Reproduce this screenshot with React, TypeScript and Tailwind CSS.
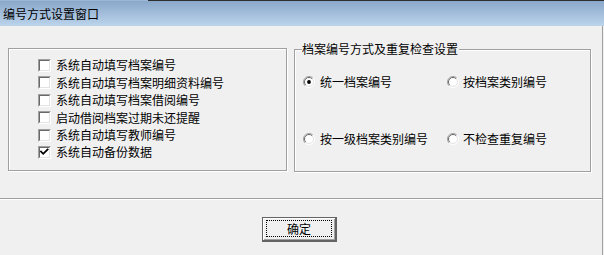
import React from "react";

function CheckBox({ checked }: { checked?: boolean }) {
  return (
    <span className="flex w-[13px] h-[13px] shrink-0 border border-t-[#a0a0a0] border-l-[#a0a0a0] border-r-white border-b-white">
      <span className="flex flex-1 items-center justify-center border border-t-[#696969] border-l-[#696969] border-r-[#e3e3e3] border-b-[#e3e3e3] bg-white">
        {checked && (
          <svg width="9" height="9" viewBox="0 0 9 9">
            <path d="M1 3.6 L3.2 5.8 L7.6 1.4" fill="none" stroke="#000" strokeWidth="1.8" strokeLinecap="square" />
          </svg>
        )}
      </span>
    </span>
  );
}

function Radio({ checked }: { checked?: boolean }) {
  return (
    <svg width="12" height="12" viewBox="0 0 12 12" className="shrink-0">
      <circle cx="6" cy="6" r="5.2" fill="#fff" />
      <path d="M2.1 9.9 A5.5 5.5 0 0 1 9.9 2.1" fill="none" stroke="#a0a0a0" strokeWidth="1" />
      <path d="M9.9 2.1 A5.5 5.5 0 0 1 2.1 9.9" fill="none" stroke="#ffffff" strokeWidth="1" />
      <path d="M2.8 9.2 A4.5 4.5 0 0 1 9.2 2.8" fill="none" stroke="#696969" strokeWidth="1" />
      <path d="M9.2 2.8 A4.5 4.5 0 0 1 2.8 9.2" fill="none" stroke="#e3e3e3" strokeWidth="1" />
      {checked && <circle cx="6" cy="6" r="1.9" fill="#000" />}
    </svg>
  );
}

const checks = [
  { label: "系统自动填写档案编号", checked: false },
  { label: "系统自动填写档案明细资料编号", checked: false },
  { label: "系统自动填写档案借阅编号", checked: false },
  { label: "启动借阅档案过期未还提醒", checked: false },
  { label: "系统自动填写教师编号", checked: false },
  { label: "系统自动备份数据", checked: true },
];

export default function App() {
  return (
    <div className="w-[604px] h-[255px] overflow-hidden bg-[#f0f0f0] text-[12px] text-black font-['Noto_Sans_CJK_SC','Noto_Sans_CJK_SC',sans-serif] flex flex-col">
      {/* title bar */}
      <div className="flex h-[1px] shrink-0">
        <div className="w-[148px] bg-[#9db6d4]" />
        <div className="flex-1 bg-[#2e2e2e]" />
      </div>
      <div className="h-[25px] shrink-0 flex items-center pl-[3px] pt-[1px] bg-gradient-to-b from-[#8aa8ca] to-[#bcd4ec] leading-[14px]">
        编号方式设置窗口
      </div>

      {/* body */}
      <div className="w-[603px] flex-1 flex flex-col border-r border-[#a0a0a0]">
        <div className="flex mt-[22px] ml-[8px] gap-[7px]">
          {/* left group */}
          <div className="w-[279px] h-[123px] border border-[#a0a0a0] shadow-[inset_1px_1px_0_#fff,1px_1px_0_#fff] pt-[7.8px] pl-[29px] flex flex-col">
            {checks.map((c) => (
              <div key={c.label} className="h-[17.4px] flex items-center gap-[5px] leading-[14px] whitespace-nowrap">
                <CheckBox checked={c.checked} />
                <span>{c.label}</span>
              </div>
            ))}
          </div>

          {/* right group */}
          <div className="relative w-[297px] h-[123px] mt-[1px] border border-[#a0a0a0] shadow-[inset_1px_1px_0_#fff,1px_1px_0_#fff] pt-[22px] pl-[8px] flex flex-col gap-[37px]">
            <span className="absolute left-[7px] top-[-8px] bg-[#f0f0f0] leading-[14px] pr-[1px] whitespace-nowrap">
              档案编号方式及重复检查设置
            </span>
            <div className="flex h-[20px] items-center">
              <div className="w-[144px] flex items-center gap-[5px] leading-[14px] whitespace-nowrap">
                <Radio checked />
                <span>统一档案编号</span>
              </div>
              <div className="flex items-center gap-[4px] leading-[14px] whitespace-nowrap">
                <Radio />
                <span>按档案类别编号</span>
              </div>
            </div>
            <div className="flex h-[20px] items-center">
              <div className="w-[144px] flex items-center gap-[5px] leading-[14px] whitespace-nowrap">
                <Radio />
                <span>按一级档案类别编号</span>
              </div>
              <div className="flex items-center gap-[4px] leading-[14px] whitespace-nowrap">
                <Radio />
                <span>不检查重复编号</span>
              </div>
            </div>
          </div>
        </div>

        {/* separator */}
        <div className="mt-[26px] h-[1px] bg-[#a0a0a0]" />
        <div className="h-[1px] bg-white" />

        {/* button */}
        <div className="flex mt-[17px] ml-[262px]">
          <button className="w-[75px] h-[25px] p-0 border border-[#646464] border-r-2 border-b-2 bg-[#f0f0f0] shadow-[inset_1px_1px_0_#fff,inset_-1px_-1px_0_#a0a0a0] flex items-center justify-center">
            <span className="w-[66px] h-[17px] mt-[-1px] border border-dotted border-black flex items-center justify-center leading-[14px] text-[12px]">
              确定
            </span>
          </button>
        </div>
      </div>
    </div>
  );
}
